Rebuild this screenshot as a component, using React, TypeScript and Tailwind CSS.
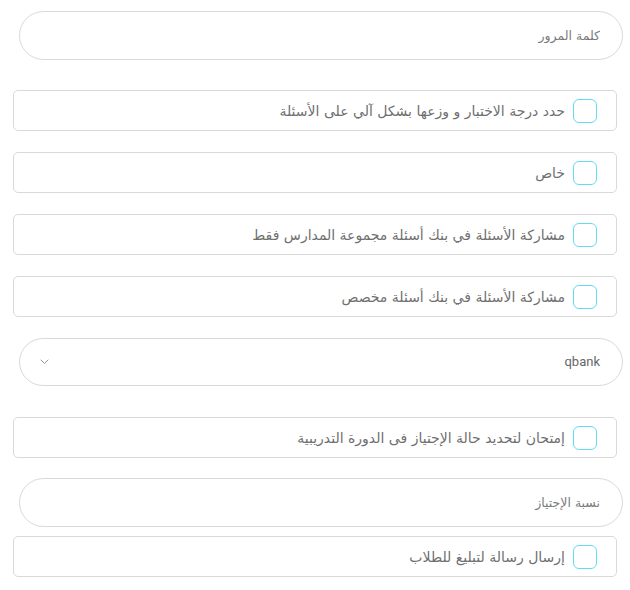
import React, { useState } from "react";

const font = { fontFamily: '"DejaVu Sans", "Noto Sans", sans-serif' };

const CheckRow: React.FC<{ label: string; className?: string }> = ({ label, className = "" }) => {
  const [checked, setChecked] = useState(false);
  return (
    <label
      className={`mx-[13px] h-[41px] flex items-center gap-[8px] rounded-[5px] border border-[#d9d9d9] bg-white pr-[19px] cursor-pointer ${className}`}
    >
      <span
        onClick={() => setChecked(!checked)}
        className={`w-[24px] h-[24px] shrink-0 rounded-[6px] border-[1.5px] border-[#62dcf7] ${checked ? "bg-[#62dcf7]" : "bg-white"}`}
      ></span>
      <span className="text-[14px] text-[#6f6f6f] leading-none">{label}</span>
    </label>
  );
};

const PillInput: React.FC<{ placeholder: string; className?: string }> = ({ placeholder, className = "" }) => (
  <input
    type="text"
    placeholder={placeholder}
    className={`mr-[7px] ml-[19px] block w-[604px] h-[49px] rounded-full border border-[#d9d9d9] bg-white px-[22px] text-[12.5px] text-[#555] placeholder:text-[#7a7a7a] focus:outline-none ${className}`}
    style={font}
  />
);

export default function App() {
  return (
    <div dir="rtl" className="w-[630px] min-h-[590px] bg-white pt-[11px]" style={font}>
      <PillInput placeholder="كلمة المرور" />

      <div className="mt-[30px] flex flex-col gap-[21px]">
        <CheckRow label="حدد درجة الاختبار و وزعها بشكل آلي على الأسئلة" />
        <CheckRow label="خاص" />
        <CheckRow label="مشاركة الأسئلة في بنك أسئلة مجموعة المدارس فقط" />
        <CheckRow label="مشاركة الأسئلة في بنك أسئلة مخصص" />
      </div>

      <div className="mr-[7px] ml-[19px] mt-[21px] h-[48px] rounded-full border border-[#d9d9d9] bg-white flex items-center justify-between pr-[22px] pl-[20px]">
        <span className="text-[13px] text-[#666]" style={{ fontFamily: '"Roboto", sans-serif' }}>qbank</span>
        <svg width="9" height="6" viewBox="0 0 9 6" fill="none">
          <path d="M1 1l3.5 3.5L8 1" stroke="#8a94a6" strokeWidth="1" strokeLinecap="round" />
        </svg>
      </div>

      <CheckRow className="mt-[31px]" label="إمتحان لتحديد حالة الإجتياز فى الدورة التدريبية" />

      <PillInput className="mt-[20px]" placeholder="نسبة الإجتياز" />

      <CheckRow className="mt-[9px]" label="إرسال رسالة لتبليغ للطلاب" />
    </div>
  );
}
